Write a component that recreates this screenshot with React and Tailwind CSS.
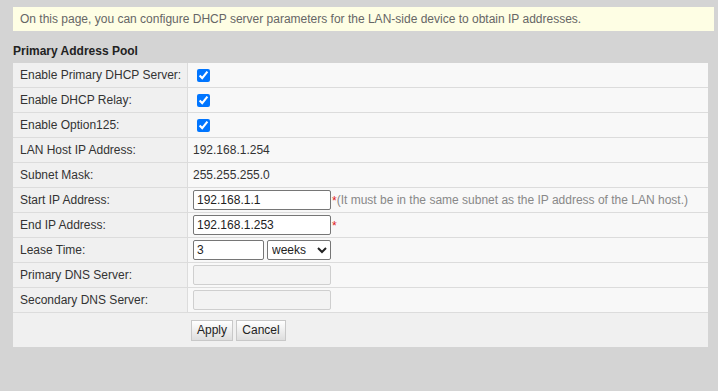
import React from "react";

function Row({ label, children }) {
  return (
    <div className="flex h-[25px] border-b border-[#dcdcdc]">
      <div className="w-[175px] shrink-0 bg-[#f0f0f0] border-r border-[#dcdcdc] pl-[7px] flex items-center text-[#333]">
        {label}
      </div>
      <div className="flex-1 bg-[#f8f8f8] pl-[5px] flex items-center text-[#333]">
        {children}
      </div>
    </div>
  );
}

function Check() {
  return (
    <input
      type="checkbox"
      defaultChecked
      className="ml-[4px] w-[13px] h-[13px] accent-[#0075ff]"
    />
  );
}

function TextInput({ value, w = "w-[138px]" }) {
  return (
    <input
      type="text"
      defaultValue={value}
      className={`${w} h-[20px] border border-[#767676] rounded-[2px] bg-white px-[3px] text-[12px] text-[#222] outline-none`}
      style={{ fontFamily: '"Liberation Sans", Arial, sans-serif' }}
    />
  );
}

function DisabledInput() {
  return (
    <input
      type="text"
      disabled
      className="w-[138px] h-[20px] border border-[#cfcfcf] rounded-[2px] bg-[#f3f3f3] px-[3px] text-[12px]"
    />
  );
}

export default function App() {
  return (
    <div
      className="w-[718px] h-[391px] bg-[#d4d4d4] pt-[7px] pl-[13px] text-[12px] overflow-hidden"
      style={{ fontFamily: '"Liberation Sans", Arial, sans-serif' }}
    >
      <div className="w-[701px] h-[24px] bg-[#fefee4] flex items-center pl-[7px] text-[#666]">
        On this page, you can configure DHCP server parameters for the LAN-side device to obtain IP addresses.
      </div>
      <div className="mt-[12px] h-[16px] leading-[16px] font-bold text-[#222]">
        Primary Address Pool
      </div>
      <div className="mt-[4px] w-[695px]">
        <Row label="Enable Primary DHCP Server:">
          <Check />
        </Row>
        <Row label="Enable DHCP Relay:">
          <Check />
        </Row>
        <Row label="Enable Option125:">
          <Check />
        </Row>
        <Row label="LAN Host IP Address:">192.168.1.254</Row>
        <Row label="Subnet Mask:">255.255.255.0</Row>
        <Row label="Start IP Address:">
          <TextInput value="192.168.1.1" />
          <span className="text-[#e02020] self-start mt-[4px] ml-[1px]">*</span>
          <span className="text-[#888]">(It must be in the same subnet as the IP address of the LAN host.)</span>
        </Row>
        <Row label="End IP Address:">
          <TextInput value="192.168.1.253" />
          <span className="text-[#e02020] self-start mt-[4px] ml-[1px]">*</span>
        </Row>
        <Row label="Lease Time:">
          <TextInput value="3" w="w-[71px]" />
          <select
            defaultValue="weeks"
            className="ml-[3px] w-[64px] h-[20px] border border-[#767676] rounded-[2px] bg-white text-[12px] text-[#222]"
            style={{ fontFamily: '"Liberation Sans", Arial, sans-serif' }}
          >
            <option value="minutes">minutes</option>
            <option value="hours">hours</option>
            <option value="days">days</option>
            <option value="weeks">weeks</option>
          </select>
        </Row>
        <Row label="Primary DNS Server:">
          <DisabledInput />
        </Row>
        <Row label="Secondary DNS Server:">
          <DisabledInput />
        </Row>
        <div className="h-[34px] bg-[#f0f0f0] flex items-center pl-[178px] gap-[3px]">
          <button className="h-[21px] w-[42px] border border-[#c8c8c8] bg-gradient-to-b from-[#ffffff] to-[#dedede] text-[12px] text-[#222]">
            Apply
          </button>
          <button className="h-[21px] w-[50px] border border-[#c8c8c8] bg-gradient-to-b from-[#ffffff] to-[#dedede] text-[12px] text-[#222]">
            Cancel
          </button>
        </div>
      </div>
    </div>
  );
}
